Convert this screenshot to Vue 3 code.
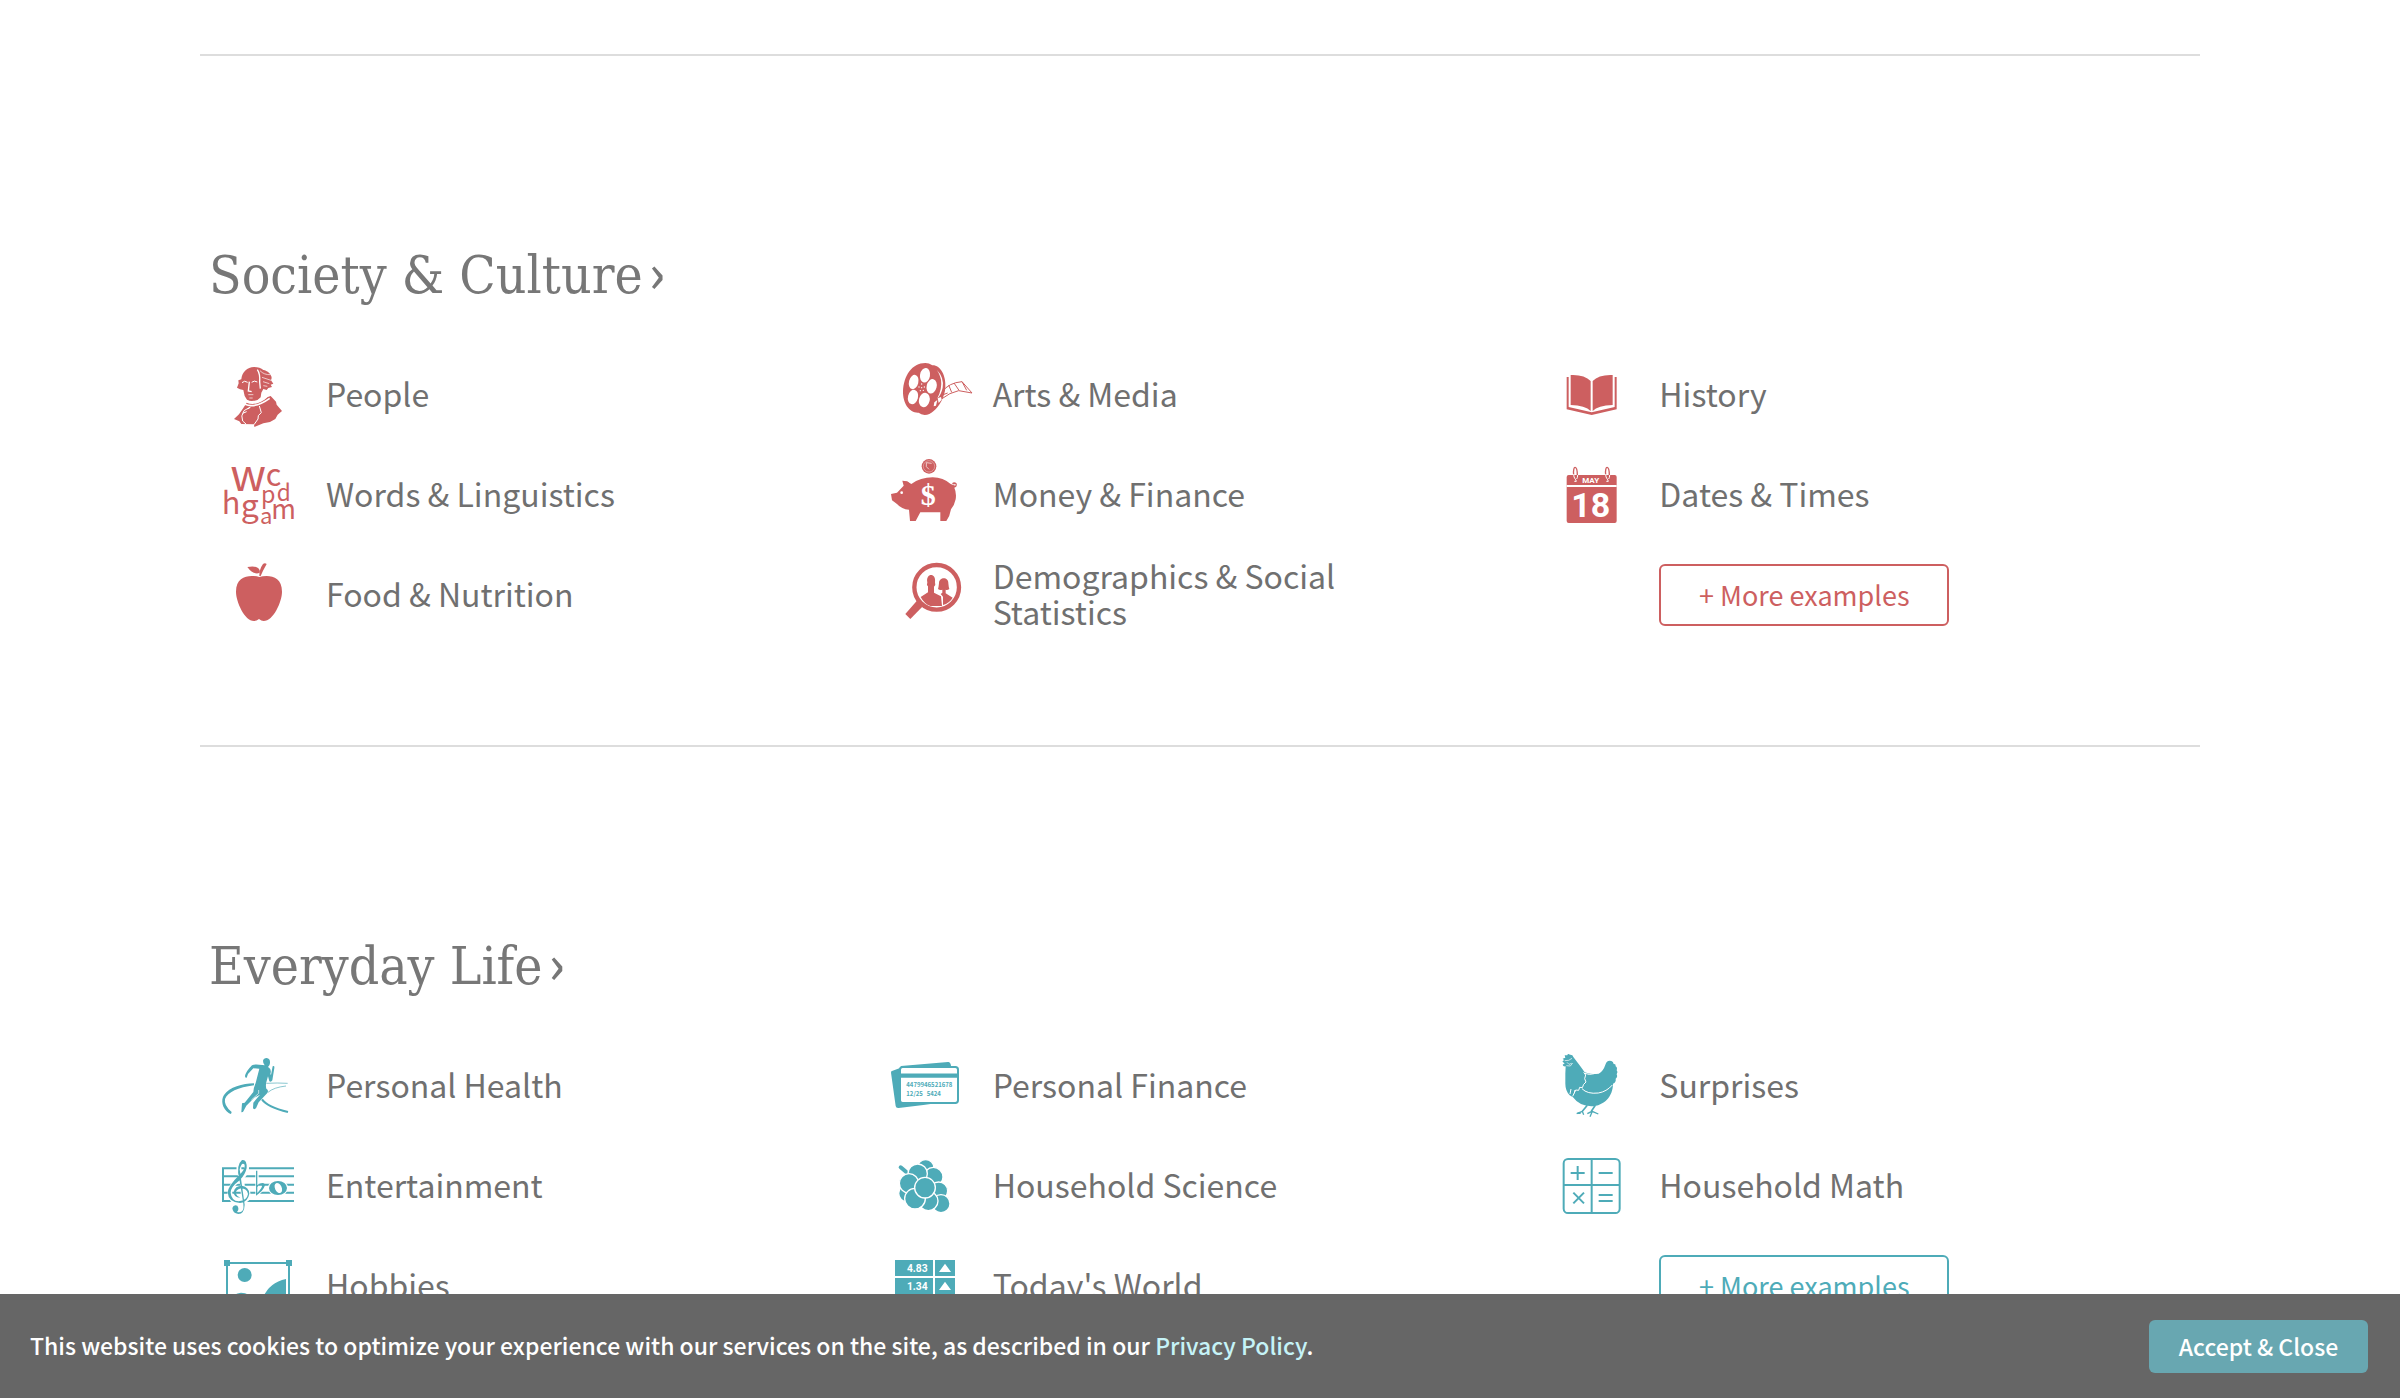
<script setup>
const sections = [
  {
    title: 'Society & Culture',
    tone: 'red',
    items: [
      { label: 'People', icon: 'people', box: '60 -15 270 300' },
      { label: 'Arts & Media', icon: 'film', box: '51 -15 270 300' },
      { label: 'History', icon: 'book', box: '40 -15 270 300' },
      { label: 'Words & Linguistics', icon: 'words', box: '60 285 270 300' },
      { label: 'Money & Finance', icon: 'piggy', box: '51 285 270 300' },
      { label: 'Dates & Times', icon: 'calendar', box: '40 285 270 300' },
      { label: 'Food & Nutrition', icon: 'apple', box: '60 585 270 300' },
      { label: 'Demographics & Social Statistics', icon: 'demographics', box: '51 585 270 300' },
    ],
  },
  {
    title: 'Everyday Life',
    tone: 'teal',
    items: [
      { label: 'Personal Health', icon: 'runner', box: '60 -12 270 300' },
      { label: 'Personal Finance', icon: 'cards', box: '51 -12 270 300' },
      { label: 'Surprises', icon: 'hen', box: '40 -12 270 300' },
      { label: 'Entertainment', icon: 'music', box: '60 288 270 300' },
      { label: 'Household Science', icon: 'grapes', box: '51 288 270 300' },
      { label: 'Household Math', icon: 'math', box: '40 288 270 300' },
      { label: 'Hobbies', icon: 'hobbies', box: '60 588 270 300' },
      { label: "Today's World", icon: 'board', box: '51 588 270 300' },
    ],
  },
]

const berries = [
  [167, 384, 25], [112, 460, 26], [190, 411, 29], [143, 401, 29], [206, 453, 27],
  [117, 430, 29], [213, 491, 27], [175, 483, 29], [135, 476, 31], [165, 443, 31],
]
</script>

<template>
  <main class="page">
    <section v-for="s in sections" :key="s.title" class="topic" :class="s.tone">
      <h2><a href="#">{{ s.title }}<span class="chevron">›</span></a></h2>
      <ul>
        <li v-for="item in s.items" :key="item.label">
          <a href="#" class="entry">
            <svg class="icon" :viewBox="item.box" aria-hidden="true">
              <g v-if="item.icon === 'people'">
                <path d="M124 88C126 66 142 51 162 51C174 51 184 54 190 60C202 62 215 72 215 84L213 91L220 101L212 104L216 111L205 114L200 120L190 117L184 128L182 142L170 152L154 156L141 149L134 138L130 120L120 118L111 113L116 100L115 91Z" />
                <path d="M140 158C158 167 184 160 203 141L212 138L228 155L230 164L246 183L233 194L226 207L210 216L190 220L163 231L162 223L124 222L118 214L102 207L117 193L130 174Z" />
                <g class="cut" stroke-width="4">
                  <path d="M126 98Q133 90 143 97M155 97Q163 90 172 96" stroke-width="3" />
                  <path d="M148 95L145 123L155 125" />
                  <path d="M172 59Q181 72 179 96L181 116" />
                  <path d="M180 62Q192 75 212 74M186 82L213 91M189 95L208 101M190 107L202 109" stroke-width="2" />
                  <path d="M145 134H160M148 144H158" stroke-width="2" />
                  <path d="M138 152Q166 163 204 137M135 163Q166 176 209 145" stroke-width="5" />
                  <path d="M151 171L132 182Q121 198 128 213L138 222M178 168L184 188Q171 196 174 207L162 224M151 172L143 177M128 190L140 185" stroke-width="3" />
                </g>
              </g>

              <g v-else-if="item.icon === 'words'">
                <text x="91" y="423" font-size="134">w</text>
                <text x="197" y="407" font-size="92">c</text>
                <text x="65" y="493" font-size="92">h</text>
                <text x="122" y="502" font-size="96">g</text>
                <text x="183" y="460" font-size="70">p</text>
                <text x="230" y="454" font-size="68">d</text>
                <text x="180" y="523" font-size="66">a</text>
                <text x="214" y="507" font-size="80">m</text>
              </g>

              <g v-else-if="item.icon === 'apple'">
                <path d="M178 681C204 674 246 676 246 725C246 755 220 813 191 813Q184 813 177 807Q170 813 162 813C134 813 108 755 108 725C108 676 151 674 178 681Z" />
                <path d="M142 651Q173 645 179 661Q180 670 174 670Q157 672 142 651ZM178 678Q178 657 189 642Q195 637 200 642L189 662L182 678Z" />
              </g>

              <g v-else-if="item.icon === 'film'">
                <path d="M166 39Q177 39 187 46C211 45 229 77 226 113C224 141 209 167 190 184Q179 195 164 195Q153 194 146 188C119 190 98 161 99 124C101 77 126 39 166 39Z" />
                <g fill="#fff">
                  <ellipse cx="165" cy="76" rx="15" ry="22" transform="rotate(10 165 76)" />
                  <ellipse cx="131" cy="96" rx="14" ry="22" transform="rotate(14 131 96)" />
                  <ellipse cx="185" cy="109" rx="15" ry="22" transform="rotate(14 185 109)" />
                  <ellipse cx="129" cy="141" rx="15" ry="22" transform="rotate(14 129 141)" />
                  <ellipse cx="163" cy="150" rx="16" ry="22" transform="rotate(14 163 150)" />
                  <circle cx="155" cy="102" r="2" /><circle cx="147" cy="111" r="2" /><circle cx="163" cy="111" r="2" />
                  <circle cx="151" cy="122" r="2" /><circle cx="160" cy="121" r="2" /><circle cx="155" cy="113" r="2" />
                  <path d="M200 59Q223 82 218 113Q213 136 202 145Q217 115 213 89Q208 69 200 59Z" />
                  <path d="M193 157L202 150L198 167L191 169ZM203 145L213 141L215 149L206 159Z" />
                </g>
                <path d="M216 126Q236 98 276 95L306 129L266 122Q238 128 216 146M236 105L245 127M252 99L267 121M276 95L290 121M214 136L233 129" fill="none" stroke="currentColor" stroke-width="3" />
              </g>

              <g v-else-if="item.icon === 'piggy'">
                <circle cx="177" cy="349" r="22" />
                <circle cx="177" cy="349" r="17" class="cut" stroke-width="1" />
                <path d="M185 340L169 338V350L177 358" class="cut" stroke-width="2" />
                <path d="M63 432L81 428L101 407L97 392L112 394L124 402Q151 382 188 382Q220 383 242 402L252 406Q259 408 256 402Q249 405 246 400Q252 394 259 399Q264 409 253 413Q260 428 257 448Q253 467 243 478Q240 498 229 513H211V487H151L137 513H120L117 479Q95 478 81 462L66 451Z" />
                <circle cx="95" cy="428" r="4" fill="#fff" />
                <path d="M111 391L123 399" class="cut" stroke-width="2" />
                <text x="175" y="465" class="dollar">$</text>
              </g>

              <g v-else-if="item.icon === 'demographics'">
                <circle cx="200" cy="712" r="67" fill="none" stroke="currentColor" stroke-width="13" />
                <path d="M142 751L157 770L121 807L106 792Z" />
                <path d="M152 741L174 727V709Q169 705 172 697C166 669 199 666 195 697Q198 705 192 710V728L213 739L216 768H181Q163 762 152 741Z" />
                <path d="M204 717Q206 711 207 700C207 680 236 680 235 700Q236 712 238 717Q232 721 227 719V730L248 743Q238 760 219 765V740L212 732L217 728V719Q209 721 204 717Z" />
              </g>

              <g v-else-if="item.icon === 'book'">
                <path d="M93 75Q134 73 153 93V183Q137 166 93 165ZM219 75Q178 73 159 93V183Q175 166 219 165Z" />
                <path d="M81 81H87V171L156 187L225 171V81H231V178L156 195L81 178Z" />
              </g>

              <g v-else-if="item.icon === 'calendar'">
                <rect x="81" y="375" width="150" height="144" rx="6" />
                <path d="M81 408H231" class="cut" stroke-width="6" />
                <g v-for="dx in [0, 96]" :key="dx" :transform="`translate(${dx} 0)`">
                  <path d="M102 374C99 344 113 345 113 376" fill="none" stroke="currentColor" stroke-width="4" />
                  <path d="M102 373C102 386 109 387 110 394L104 394M114 375Q114 383 111 387" class="cut" stroke-width="3" />
                </g>
                <text x="153" y="399" class="month">MAY</text>
                <text x="153" y="500" class="day">18</text>
              </g>

              <g v-else-if="item.icon === 'runner'">
                <path d="M189 62Q191 54 200 54Q211 55 210 69Q210 75 204 81L208 84Q215 91 211 102L213 105L218 79Q224 76 223 84L217 121Q213 128 208 124L204 109L200 123Q196 134 199 146Q207 151 202 159L176 187L168 205Q162 210 159 205L160 188L180 164L163 173L139 197L129 216L124 217L126 190L134 188L160 156Q160 145 167 129L178 86L160 85L144 102L140 113Q135 115 135 108Q138 94 156 76Q164 71 187 75L194 76Q189 70 189 62Z" />
                <path d="M186 178Q202 201 264 216" fill="none" stroke="currentColor" stroke-width="6" />
                <path d="M95 216L93 222L87 220C66 205 62 180 72 165C88 142 128 130 162 130V136C114 142 83 157 75 177Q71 196 95 216Z" />
                <path d="M199 130Q232 128 263 130M204 157Q221 142 258 138" fill="none" stroke="currentColor" stroke-width="2" />
                <path d="M176 150L176 160L154 180" class="cut" stroke-width="2" />
              </g>

              <g v-else-if="item.icon === 'music'">
                <path d="M282 385H69V483H282M69 409H282M69 434H282M69 458H282" fill="none" stroke="currentColor" stroke-width="6" />
                <g fill="none" stroke="#fff" stroke-width="14">
                  <path d="M121 407Q109 374 129 362Q147 377 136 399Q126 416 103 430Q79 454 98 480Q121 495 141 477Q151 451 129 442M125 410L132 493Q131 524 105 510" />
                  <path d="M171 392V464L195 439" stroke-width="10" />
                </g>
                <path d="M118 417Q107 376 126 360Q141 357 140 384Q136 404 119 421Q92 441 92 458Q94 482 116 484Q141 482 144 462Q141 446 123 445Q105 451 108 461Q111 470 121 473Q100 472 101 456Q105 437 126 437Q147 441 148 461Q144 486 120 489Q85 487 83 457Q85 437 118 405Q136 387 134 374Q125 364 119 388L134 494Q133 521 115 522Q98 520 97 504Q101 492 112 497Q119 507 111 516Q125 520 130 507Q131 502 130 491Z" />
                <path d="M168 392H172V435Q193 423 195 436Q190 453 168 467ZM172 441V459Q188 442 186 436Q180 430 172 441Z" fill-rule="evenodd" />
                <ellipse cx="234" cy="444" rx="30" ry="25" fill="#fff" />
                <ellipse cx="234" cy="444" rx="27" ry="21" />
                <ellipse cx="235" cy="444" rx="10" ry="16" fill="#fff" transform="rotate(-25 235 444)" />
              </g>

              <g v-else-if="item.icon === 'hobbies'">
                <rect x="81" y="669" width="186" height="160" fill="none" stroke="currentColor" stroke-width="6" />
                <path d="M72 660H90V678H72ZM258 660H276V678H258ZM72 820H90V838H72ZM258 820H276V838H258Z" />
                <circle cx="134" cy="705" r="21" />
                <path d="M258 717Q208 728 190 771L174 790Q151 758 123 758Q101 760 87 779V822H258Z" />
              </g>

              <g v-else-if="item.icon === 'cards'">
                <path d="M64 94L92 83L93 78L234 66Q241 65 243 77L246 183L160 195L86 204Q78 205 77 198L63 98Z" />
                <rect x="90" y="81" width="174" height="108" rx="8" fill="#fff" stroke="currentColor" stroke-width="6" />
                <path d="M92 107H264" stroke="currentColor" stroke-width="13" />
                <text x="109" y="140" class="card-text">4479946521678</text>
                <text x="109" y="167" class="card-text">12/25</text>
                <text x="170" y="167" class="card-text">5424</text>
              </g>

              <g v-else-if="item.icon === 'grapes'">
                <path d="M92 382L116 402" stroke="currentColor" stroke-width="12" stroke-linecap="round" />
                <circle v-for="([x, y, r], i) in berries" :key="i" :cx="x" :cy="y" :r="r" stroke="#fff" stroke-width="4" />
              </g>

              <g v-else-if="item.icon === 'board'">
                <path d="M75 660H189V708H75ZM195 660H255V708H195ZM75 714H189V762H75ZM195 714H255V762H195ZM75 768H189V816H75ZM195 768H255V816H195Z" />
                <path d="M207 696L225 671L243 696ZM207 750L225 725L243 750Z" fill="#fff" />
                <text x="173" y="696" class="rate">4.83</text>
                <text x="173" y="750" class="rate">1.34</text>
              </g>

              <g v-else-if="item.icon === 'hen'">
                <path d="M77 53L75 46L83 46Q84 39 91 44Q99 43 101 51L121 77L135 97Q153 105 177 101Q190 96 198 72Q203 59 215 63Q221 64 222 72Q229 71 228 79Q234 82 231 91Q236 96 231 103Q235 111 228 116Q230 127 220 131C220 168 195 197 155 199Q119 198 100 172L90 166Q77 152 77 131V101L78 79Q70 80 69 74L75 70L68 65L73 60L69 56Z" />
                <path d="M143 196L128 214M167 196L155 214" stroke="currentColor" stroke-width="5" />
                <path d="M111 221L128 214L132 224M123 220L113 219M143 221L157 214L176 222M158 214L151 230" fill="none" stroke="currentColor" stroke-width="4" />
                <g class="cut" stroke-width="3">
                  <path d="M132 97L138 105L135 116L139 126L132 133L128 143L120 142L117 151L108 150L99 169M94 147L91 162M106 150L104 160" />
                  <path d="M127 146Q143 163 176 159Q201 155 218 135M135 100Q149 106 164 101" />
                  <path d="M75 62L87 61L97 55M82 67L88 73L96 70M80 77L92 78L99 69" stroke-width="2" />
                </g>
              </g>

              <g v-else-if="item.icon === 'math'" fill="none" stroke="currentColor" stroke-width="6">
                <rect x="72" y="357" width="168" height="162" rx="13" />
                <path d="M156 357V519M72 435H240M93 399H135M114 378V420M177 399H219M177 465H219M177 483H219M101 458L133 490M133 458L101 490" />
              </g>
            </svg>
            <span class="label">{{ item.label }}</span>
          </a>
        </li>
        <li class="more"><button type="button">+ More examples</button></li>
      </ul>
    </section>
  </main>

  <footer class="cookies">
    <p>This website uses cookies to optimize your experience with our services on the site, as described in our <a href="#">Privacy Policy</a>.</p>
    <button type="button">Accept &amp; Close</button>
  </footer>
</template>

<style>
body {
  margin: 0;
  background: #fff;
  overflow: hidden;
}
</style>

<style scoped>
.page,
.cookies,
button {
  font-family: "Noto Sans CJK SC", "Noto Sans", sans-serif;
}

.page {
  max-width: 2000px;
  margin: 0 auto;
  padding: 54px 24px 0;
  color: #777;
}

.red {
  --tone: #cd5f60;
}

.teal {
  --tone: #4eabb8;
}

.topic {
  border-top: 2px solid #ddd;
  padding: 179px 0 100px;
}

h2 {
  margin: 0 0 30px;
  padding-left: 9px;
  font: 400 53px/80px "DejaVu Serif Condensed", "DejaVu Serif", serif;
  font-stretch: condensed;
}

a {
  color: inherit;
  text-decoration: none;
}

.chevron {
  margin-left: 6px;
  font-family: "Noto Sans CJK SC", sans-serif;
  font-weight: 500;
  line-height: 1;
}

ul {
  display: grid;
  grid-template-columns: repeat(3, 1fr);
  grid-auto-rows: 100px;
  margin: 0;
  padding: 0;
  list-style: none;
}

.entry {
  display: flex;
  align-items: center;
  height: 100px;
  padding-left: 20px;
}

.icon {
  flex: none;
  width: 90px;
  height: 100px;
  margin-right: 16px;
  overflow: visible;
  color: var(--tone);
  fill: currentColor;
}

.label {
  max-width: 400px;
  padding-bottom: 4px;
  color: #707070;
  font-size: 32px;
  line-height: 36px;
}

.cut {
  fill: none;
  stroke: #fff;
}

.dollar {
  fill: #fff;
  font: 700 90px "Liberation Serif", serif;
  text-anchor: middle;
}

.month {
  fill: #fff;
  font: 700 24px Roboto, sans-serif;
  text-anchor: middle;
}

.day {
  fill: #fff;
  font: 700 102px Roboto, sans-serif;
  text-anchor: middle;
}

.card-text {
  font-size: 18px;
  font-weight: 700;
}

.rate {
  fill: #fff;
  font: 700 31px Roboto, sans-serif;
  text-anchor: end;
}

.more {
  display: flex;
  align-items: center;
  padding-left: 126px;
}

.more button {
  width: 290px;
  height: 62px;
  padding: 0 0 2px;
  border: 2px solid var(--tone);
  border-radius: 6px;
  background: #fff;
  color: var(--tone);
  font-size: 27px;
}

.cookies {
  position: fixed;
  right: 0;
  bottom: 0;
  left: 0;
  display: flex;
  align-items: center;
  justify-content: space-between;
  height: 104px;
  padding: 0 32px 0 30px;
  box-sizing: border-box;
  background: #666;
  color: #fff;
  font-size: 23px;
  font-weight: 500;
}

.cookies p {
  margin: 0;
  padding-bottom: 2px;
}

.cookies a {
  color: #c5f3f7;
}

.cookies button {
  width: 219px;
  height: 53px;
  padding: 0;
  border: 0;
  border-radius: 6px;
  background: #68a7b1;
  color: #fff;
  font-size: 23px;
  font-weight: 500;
}
</style>
